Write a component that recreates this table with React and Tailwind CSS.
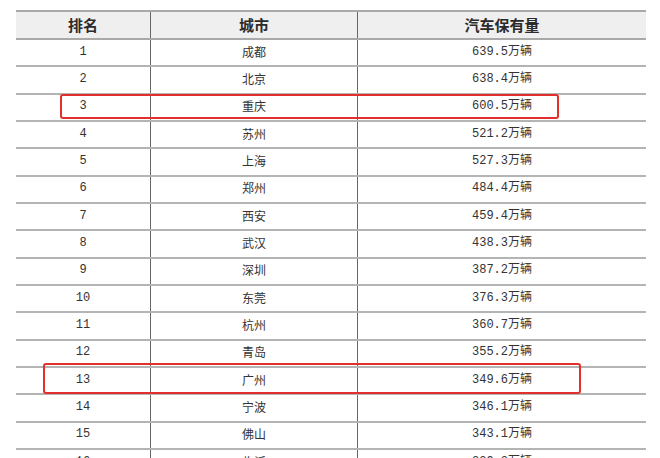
const rows = [
  ['1', '成都', '639.5'],
  ['2', '北京', '638.4'],
  ['3', '重庆', '600.5'],
  ['4', '苏州', '521.2'],
  ['5', '上海', '527.3'],
  ['6', '郑州', '484.4'],
  ['7', '西安', '459.4'],
  ['8', '武汉', '438.3'],
  ['9', '深圳', '387.2'],
  ['10', '东莞', '376.3'],
  ['11', '杭州', '360.7'],
  ['12', '青岛', '355.2'],
  ['13', '广州', '349.6'],
  ['14', '宁波', '346.1'],
  ['15', '佛山', '343.1'],
  ['16', '临沂', '339.3'],
];

const mono = { fontFamily: '"Liberation Mono", "Noto Sans CJK SC", monospace' };

export default function App() {
  return (
    <div className="relative h-[458px] w-[660px] overflow-hidden bg-white pl-[16px] pr-[14px] pt-[10px] text-[#333]">
      {/* header */}
      <div className="flex h-[30px] border-y-2 border-[#a9a9a9] bg-[#efefef] font-['Noto_Sans_CJK_SC',sans-serif] text-[15px] font-bold text-[#2b2b2b]">
        <div className="flex w-[135px] items-center justify-center border-r border-[#666]">排名</div>
        <div className="flex w-[207px] items-center justify-center border-r border-[#666]">城市</div>
        <div className="flex flex-1 items-center justify-center">汽车保有量</div>
      </div>

      {rows.map(([rank, city, num]) => (
        <div
          key={rank}
          className="flex h-[27.33px] border-b-2 border-[#b4b4b4] text-[12px] leading-none"
        >
          <div
            className="flex w-[135px] items-center justify-center border-r border-[#666] pb-[2px] font-['Liberation_Mono',monospace]"
          >
            {rank}
          </div>
          <div className="flex w-[207px] items-center justify-center border-r border-[#666] pb-[2px] font-['Noto_Sans_CJK_SC',sans-serif]">
            {city}
          </div>
          <div className="flex flex-1 items-center justify-center pb-[2px]" style={mono}>
            {num}万辆
          </div>
        </div>
      ))}

      {/* highlight boxes */}
      <div className="absolute left-[60px] top-[94px] h-[25px] w-[499px] rounded-[3px] border-2 border-[#e2302c]" />
      <div className="absolute left-[43px] top-[363px] h-[31px] w-[538px] rounded-[3px] border-2 border-[#e2302c]" />
    </div>
  );
}
